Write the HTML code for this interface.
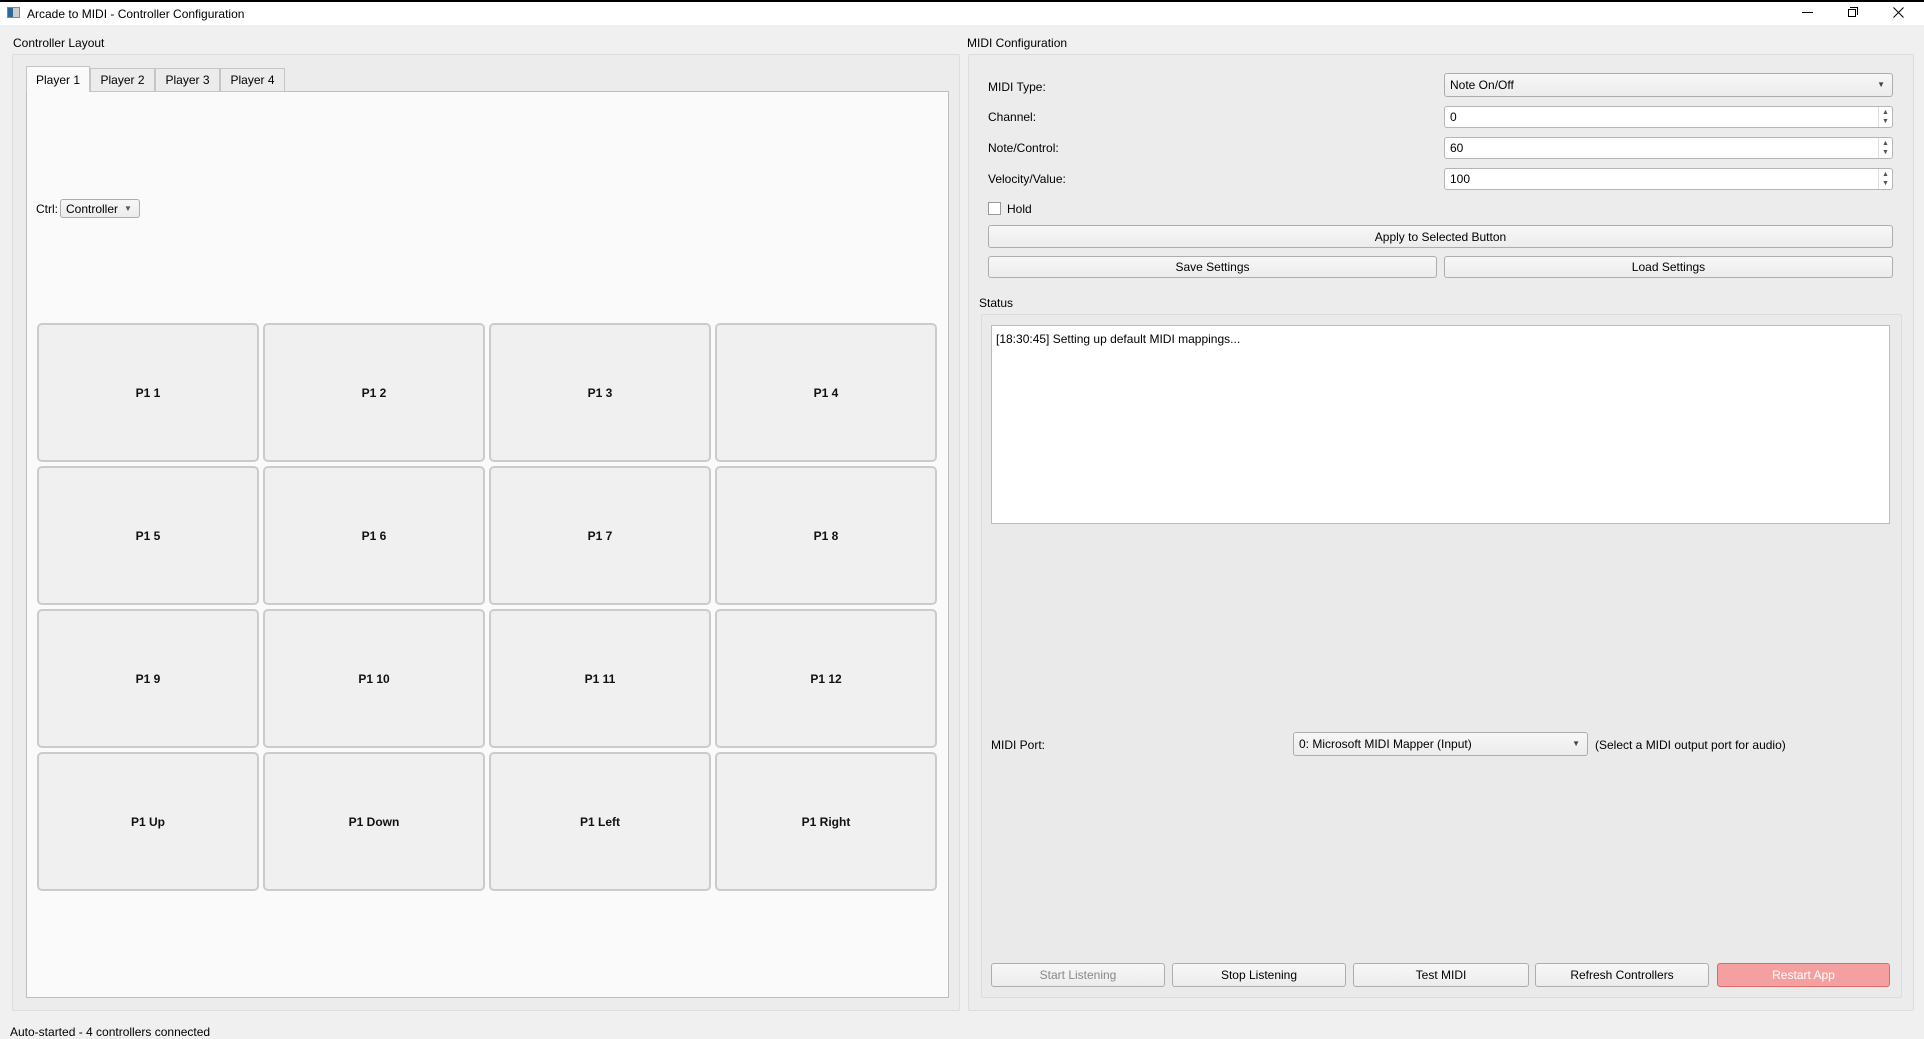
<!DOCTYPE html>
<html><head><meta charset="utf-8"><style>
*{box-sizing:border-box;margin:0;padding:0}
body{width:1924px;height:1038px;background:#f0f0f0;font-family:"Liberation Sans",sans-serif;font-size:12px;color:#000;position:relative;overflow:hidden}
.a{position:absolute}
.grp{position:absolute;border:1px solid #dcdcdc;background:#ececec;border-radius:2px}
.btn{position:absolute;background:linear-gradient(#f7f7f7,#ececec);border:1px solid #adadad;border-radius:3px;display:flex;align-items:center;justify-content:center}
.pad{position:absolute;width:222px;height:139px;background:#f0f0f0;border:2px solid #cbcbcb;border-radius:5px;display:flex;align-items:center;justify-content:center;font-weight:bold;font-size:12px;color:#111}
.inp{position:absolute;background:#fff;border:1px solid #b5b5b5;border-radius:3px;padding-left:5px;display:flex;align-items:center}
.spin{position:absolute;right:0;top:0;width:14px;height:100%;border-left:1px solid #ddd;font-size:7px;color:#555;text-align:center;line-height:9px;padding-top:1px}
.tab{position:absolute;top:68px;height:24px;border:1px solid #c5c5c5;background:#ececec;display:flex;align-items:center;justify-content:center}
.lbl{position:absolute;line-height:14px}
</style></head><body>
<div class="a" style="left:0;top:0;width:1924px;height:2px;background:#000"></div>
<div class="a" style="left:0;top:2px;width:1924px;height:23px;background:#fff"></div>
<div class="a" style="left:7px;top:7px;width:13px;height:11px;border:1px solid #888;background:linear-gradient(90deg,#2a6a9a 0 45%,#ccc 45%)"></div>
<div class="lbl" style="left:27px;top:7px">Arcade to MIDI - Controller Configuration</div>
<div class="a" style="left:1802px;top:12px;width:11px;height:1px;background:#000"></div>
<div class="a" style="left:1848px;top:9px;width:8px;height:8px;border:1px solid #000"></div>
<div class="a" style="left:1850px;top:7px;width:8px;height:8px;border-top:1px solid #000;border-right:1px solid #000"></div>
<svg class="a" style="left:1893px;top:7px" width="11" height="11"><path d="M0.5 0.5L10.5 10.5M10.5 0.5L0.5 10.5" stroke="#000" stroke-width="1"/></svg>

<div class="lbl" style="left:13px;top:36px">Controller Layout</div>
<div class="grp" style="left:12px;top:54px;width:948px;height:957px"></div>
<div class="a" style="left:26px;top:91px;width:923px;height:907px;background:#fafafa;border:1px solid #bdbdbd"></div>
<div class="tab" style="left:26px;top:66px;width:64px;height:26px;background:#fafafa;border-bottom:none">Player 1</div>
<div class="tab" style="left:90px;width:65px">Player 2</div>
<div class="tab" style="left:155px;width:65px">Player 3</div>
<div class="tab" style="left:220px;width:65px">Player 4</div>
<div class="lbl" style="left:36px;top:202px">Ctrl:</div>
<div class="btn" style="left:60px;top:199px;width:80px;height:19px;justify-content:flex-start;padding-left:5px">Controller<span style="font-size:8px;margin-left:6px;color:#555">▼</span></div>

<div class="pad" style="left:37px;top:323px">P1 1</div>
<div class="pad" style="left:263px;top:323px">P1 2</div>
<div class="pad" style="left:489px;top:323px">P1 3</div>
<div class="pad" style="left:715px;top:323px">P1 4</div>
<div class="pad" style="left:37px;top:466px">P1 5</div>
<div class="pad" style="left:263px;top:466px">P1 6</div>
<div class="pad" style="left:489px;top:466px">P1 7</div>
<div class="pad" style="left:715px;top:466px">P1 8</div>
<div class="pad" style="left:37px;top:609px">P1 9</div>
<div class="pad" style="left:263px;top:609px">P1 10</div>
<div class="pad" style="left:489px;top:609px">P1 11</div>
<div class="pad" style="left:715px;top:609px">P1 12</div>
<div class="pad" style="left:37px;top:752px">P1 Up</div>
<div class="pad" style="left:263px;top:752px">P1 Down</div>
<div class="pad" style="left:489px;top:752px">P1 Left</div>
<div class="pad" style="left:715px;top:752px">P1 Right</div>

<div class="lbl" style="left:967px;top:36px">MIDI Configuration</div>
<div class="grp" style="left:968px;top:54px;width:946px;height:957px"></div>
<div class="lbl" style="left:988px;top:80px">MIDI Type:</div>
<div class="btn" style="left:1444px;top:73px;width:449px;height:24px;justify-content:flex-start;padding-left:5px">Note On/Off<span class="a" style="right:7px;top:6px;font-size:8px;color:#444">▼</span></div>
<div class="lbl" style="left:988px;top:110px">Channel:</div>
<div class="inp" style="left:1444px;top:106px;width:449px;height:22px">0<div class="spin">▲<br>▼</div></div>
<div class="lbl" style="left:988px;top:141px">Note/Control:</div>
<div class="inp" style="left:1444px;top:137px;width:449px;height:22px">60<div class="spin">▲<br>▼</div></div>
<div class="lbl" style="left:988px;top:172px">Velocity/Value:</div>
<div class="inp" style="left:1444px;top:168px;width:449px;height:22px">100<div class="spin">▲<br>▼</div></div>
<div class="a" style="left:988px;top:202px;width:13px;height:13px;background:#fff;border:1px solid #999"></div>
<div class="lbl" style="left:1007px;top:202px">Hold</div>
<div class="btn" style="left:988px;top:225px;width:905px;height:23px">Apply to Selected Button</div>
<div class="btn" style="left:988px;top:256px;width:449px;height:22px">Save Settings</div>
<div class="btn" style="left:1444px;top:256px;width:449px;height:22px">Load Settings</div>
<div class="lbl" style="left:979px;top:296px">Status</div>
<div class="grp" style="left:981px;top:314px;width:921px;height:684px;background:#eaeaea"></div>
<div class="a" style="left:991px;top:325px;width:899px;height:199px;background:#fff;border:1px solid #bcbcbc"></div>
<div class="lbl" style="left:996px;top:332px">[18:30:45] Setting up default MIDI mappings...</div>
<div class="lbl" style="left:991px;top:738px">MIDI Port:</div>
<div class="btn" style="left:1293px;top:732px;width:295px;height:24px;justify-content:flex-start;padding-left:5px">0: Microsoft MIDI Mapper (Input)<span class="a" style="right:7px;top:6px;font-size:8px;color:#444">▼</span></div>
<div class="lbl" style="left:1595px;top:738px">(Select a MIDI output port for audio)</div>
<div class="btn" style="left:991px;top:963px;width:174px;height:24px;color:#888">Start Listening</div>
<div class="btn" style="left:1172px;top:963px;width:174px;height:24px">Stop Listening</div>
<div class="btn" style="left:1353px;top:963px;width:176px;height:24px">Test MIDI</div>
<div class="btn" style="left:1535px;top:963px;width:174px;height:24px">Refresh Controllers</div>
<div class="btn" style="left:1717px;top:963px;width:173px;height:24px;background:#f5a0a0;border-color:#e06868;color:#fff">Restart App</div>

<div class="lbl" style="left:10px;top:1025px">Auto-started - 4 controllers connected</div>
</body></html>
